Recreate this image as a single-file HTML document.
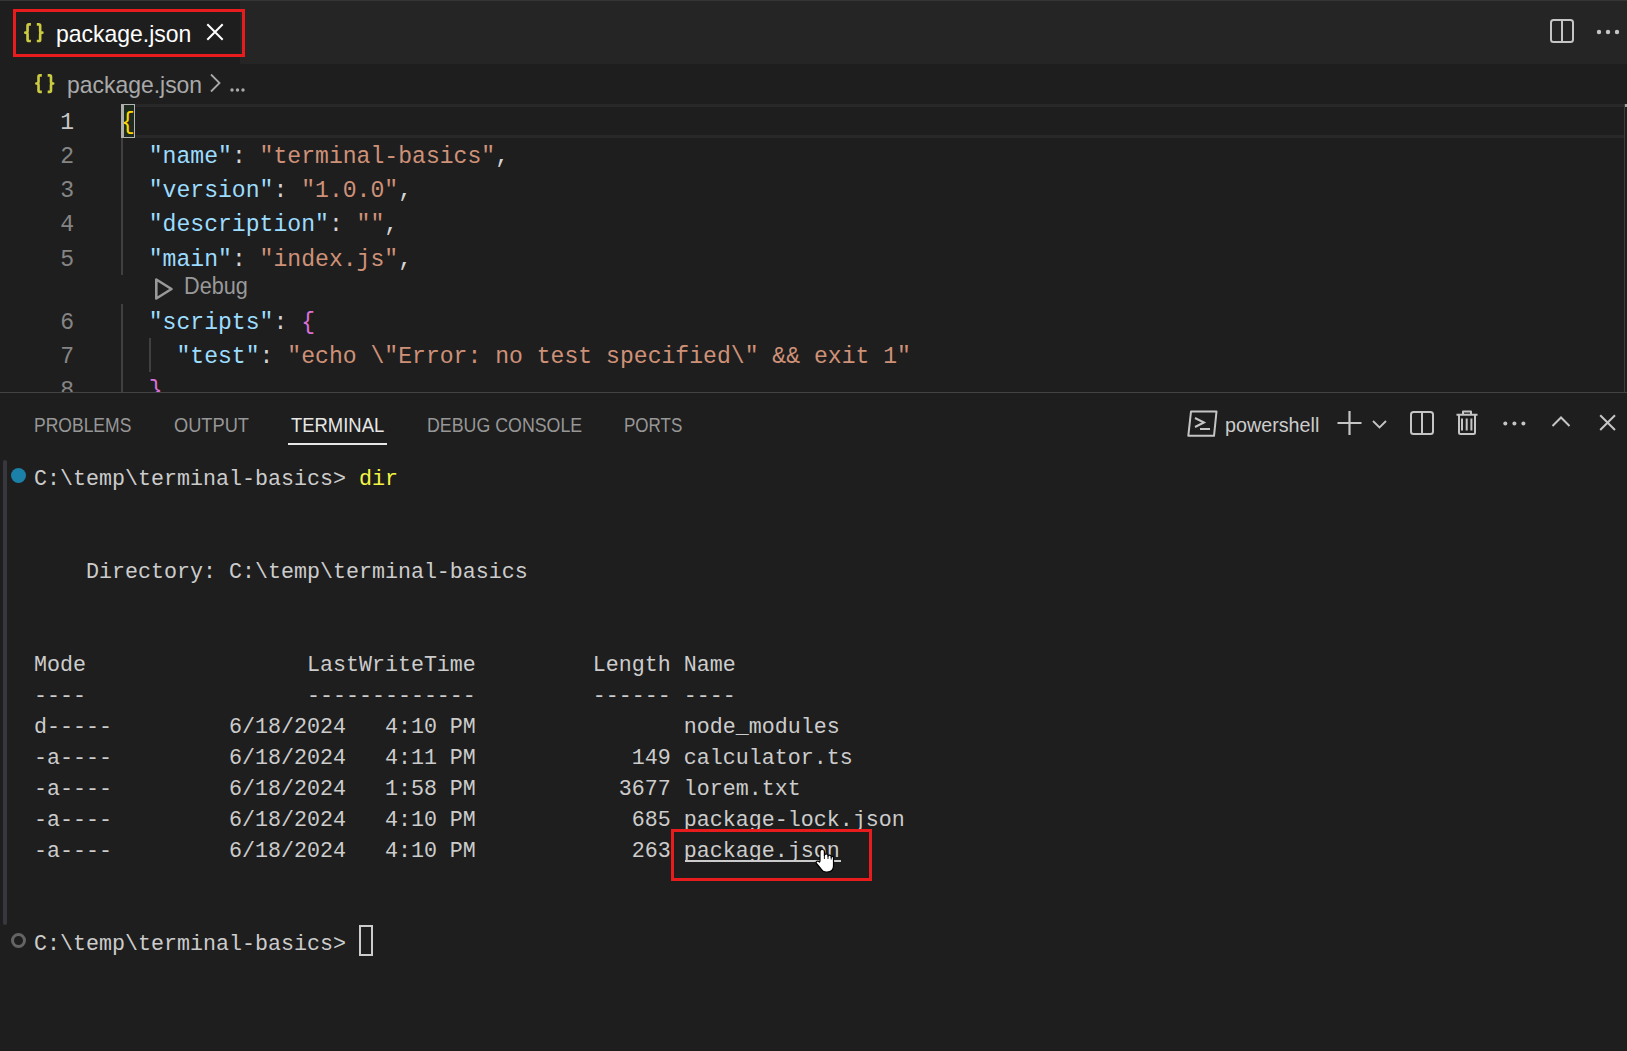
<!DOCTYPE html><html><head><meta charset="utf-8"><style>
*{margin:0;padding:0;box-sizing:border-box}
html,body{width:1627px;height:1051px;overflow:hidden;background:#1e1e1e}
body{position:relative;font-family:"Liberation Sans",sans-serif}
.abs{position:absolute}
.sx{position:absolute;white-space:pre;font-family:"Liberation Sans",sans-serif;transform-origin:0 0;line-height:1}
.ln{position:absolute;left:0;width:74px;transform:scaleY(1.06);transform-origin:0 23px;text-align:right;font-family:"Liberation Mono",monospace;font-size:23.1px;line-height:34px;height:34px;color:#858585}
.cl{position:absolute;left:121px;transform:scaleY(1.06);transform-origin:0 23px;font-family:"Liberation Mono",monospace;font-size:23.1px;line-height:34px;height:34px;color:#d4d4d4;white-space:pre}
.k{color:#9cdcfe}.s{color:#ce9178}.b1{color:#ffd700}.b2{color:#da70d6}
.tr{position:absolute;left:34px;transform:scaleY(1.06);transform-origin:0 21px;font-family:"Liberation Mono",monospace;font-size:21.67px;line-height:31px;height:31px;color:#cccccc;white-space:pre}
.y{color:#f5f543}
</style></head><body>
<div class="abs" style="left:0;top:0;width:1627px;height:64px;background:#252526"></div>
<div class="abs" style="left:0;top:0;width:240px;height:64px;background:#1e1e1e"></div>
<div class="abs" style="left:0;top:0;width:1627px;height:1px;background:#353535"></div>
<svg class="abs" style="left:24.30px;top:22.50px;overflow:visible" width="22" height="22" viewBox="0 0 22 22"><g transform="scale(0.985)" fill="none" stroke="#cbcb41" stroke-width="2.7" stroke-linejoin="round" stroke-linecap="butt"><path d="M7.0 1.35H5Q3.6 1.35 3.6 2.75V8.3Q3.6 9.8 1.35 9.8Q3.6 9.8 3.6 11.3V16.9Q3.6 18.3 5 18.3H7.0"/><path d="M13.0 1.35H15Q16.4 1.35 16.4 2.75V8.3Q16.4 9.8 18.65 9.8Q16.4 9.8 16.4 11.3V16.9Q16.4 18.3 15 18.3H13.0"/></g></svg>
<div class="sx" style="left:55.80px;top:22.28px;font-size:24.00px;color:#ffffff;transform:scaleX(0.9572);">package.json</div>
<svg class="abs" style="left:204px;top:21px" width="22" height="21" viewBox="0 0 22 21"><path d="M3.3 3.3L18.7 18.7M18.7 3.3L3.3 18.7" stroke="#ffffff" stroke-width="2"/></svg>
<div class="abs" style="left:13px;top:9px;width:232px;height:48px;border:3px solid #e81c1c"></div>
<svg class="abs" style="left:1549px;top:18px" width="26" height="26" viewBox="0 0 26 26"><rect x="2" y="2" width="22" height="22" rx="2.5" fill="none" stroke="#c5c5c5" stroke-width="2"/><path d="M13 2V24" stroke="#c5c5c5" stroke-width="2"/></svg>
<svg class="abs" style="left:1594px;top:27px" width="28" height="10" viewBox="0 0 28 10"><circle cx="5" cy="5" r="2.2" fill="#c5c5c5"/><circle cx="14" cy="5" r="2.2" fill="#c5c5c5"/><circle cx="23" cy="5" r="2.2" fill="#c5c5c5"/></svg>
<svg class="abs" style="left:34.90px;top:73.80px;overflow:visible" width="22" height="22" viewBox="0 0 22 22"><g transform="scale(0.975)" fill="none" stroke="#cbcb41" stroke-width="2.7" stroke-linejoin="round" stroke-linecap="butt"><path d="M7.0 1.35H5Q3.6 1.35 3.6 2.75V8.3Q3.6 9.8 1.35 9.8Q3.6 9.8 3.6 11.3V16.9Q3.6 18.3 5 18.3H7.0"/><path d="M13.0 1.35H15Q16.4 1.35 16.4 2.75V8.3Q16.4 9.8 18.65 9.8Q16.4 9.8 16.4 11.3V16.9Q16.4 18.3 15 18.3H13.0"/></g></svg>
<div class="sx" style="left:66.60px;top:72.58px;font-size:24.00px;color:#a9a9a9;transform:scaleX(0.9551);">package.json</div>
<svg class="abs" style="left:207px;top:72px" width="16" height="22" viewBox="0 0 16 22"><path d="M4 2.5L12.5 11L4 19.5" fill="none" stroke="#a9a9a9" stroke-width="1.8"/></svg>
<svg class="abs" style="left:229px;top:86px" width="18" height="8" viewBox="0 0 18 8"><circle cx="3" cy="4" r="1.7" fill="#a9a9a9"/><circle cx="8.5" cy="4" r="1.7" fill="#a9a9a9"/><circle cx="14" cy="4" r="1.7" fill="#a9a9a9"/></svg>
<div class="abs" style="left:0;top:0;width:1627px;height:392px;overflow:hidden"><div class="abs" style="left:121px;top:104px;width:1503px;height:34px;border:3px solid #282828;border-left:0;border-right:0"></div><div class="abs" style="left:1624px;top:104px;width:1px;height:288px;background:#3c3c3c"></div><div class="abs" style="left:1625px;top:104px;width:2px;height:3px;background:#a0a0a0"></div><div class="abs" style="left:121px;top:138px;width:2px;height:137px;background:#404040"></div><div class="abs" style="left:121px;top:304.2px;width:2px;height:88px;background:#404040"></div><div class="abs" style="left:149px;top:338.4px;width:2px;height:34px;background:#404040"></div><div class="abs" style="left:121px;top:104px;width:14px;height:34px;border:1px solid #b4b4b4;background:#1d2a1d"></div><div class="ln" style="top:105.70px;color:#c6c6c6">1</div><div class="cl" style="top:105.70px"><span class="b1">{</span></div><div class="ln" style="top:139.90px;color:#858585">2</div><div class="cl" style="top:139.90px">  <span class="k">"name"</span>: <span class="s">"terminal-basics"</span>,</div><div class="ln" style="top:174.10px;color:#858585">3</div><div class="cl" style="top:174.10px">  <span class="k">"version"</span>: <span class="s">"1.0.0"</span>,</div><div class="ln" style="top:208.30px;color:#858585">4</div><div class="cl" style="top:208.30px">  <span class="k">"description"</span>: <span class="s">""</span>,</div><div class="ln" style="top:242.50px;color:#858585">5</div><div class="cl" style="top:242.50px">  <span class="k">"main"</span>: <span class="s">"index.js"</span>,</div><div class="ln" style="top:305.90px;color:#858585">6</div><div class="cl" style="top:305.90px">  <span class="k">"scripts"</span>: <span class="b2">{</span></div><div class="ln" style="top:340.10px;color:#858585">7</div><div class="cl" style="top:340.10px">    <span class="k">"test"</span>: <span class="s">"echo \"Error: no test specified\" &amp;&amp; exit 1"</span></div><div class="ln" style="top:374.30px;color:#858585">8</div><div class="cl" style="top:374.30px">  <span class="b2">}</span></div><div class="abs" style="left:121px;top:104px;width:3px;height:34px;background:#aeafad"></div><svg class="abs" style="left:152px;top:275px" width="24" height="28" viewBox="0 0 24 28"><path d="M4.3 4.5L19.5 14L4.3 23.5Z" fill="none" stroke="#999999" stroke-width="2.6" stroke-linejoin="round"/></svg></div>
<div class="sx" style="left:184.20px;top:275.10px;font-size:23.50px;color:#999999;transform:scaleX(0.9219);">Debug</div>
<div class="abs" style="left:0;top:392px;width:1627px;height:1px;background:#434343"></div>
<div class="sx" style="left:33.90px;top:415.00px;font-size:20.20px;color:#979797;transform:scaleX(0.8675);">PROBLEMS</div>
<div class="sx" style="left:173.80px;top:415.00px;font-size:20.20px;color:#979797;transform:scaleX(0.9035);">OUTPUT</div>
<div class="sx" style="left:290.70px;top:415.00px;font-size:20.20px;color:#e7e7e7;transform:scaleX(0.9129);">TERMINAL</div>
<div class="sx" style="left:426.50px;top:415.00px;font-size:20.20px;color:#979797;transform:scaleX(0.8813);">DEBUG CONSOLE</div>
<div class="sx" style="left:623.80px;top:415.00px;font-size:20.20px;color:#979797;transform:scaleX(0.8416);">PORTS</div>
<div class="abs" style="left:288px;top:443px;width:99px;height:2px;background:#e7e7e7"></div>
<svg class="abs" style="left:1186px;top:409px" width="32" height="29" viewBox="0 0 32 29"><path d="M5 2.5H30.5L28 26.8H2.3Z" fill="none" stroke="#c5c5c5" stroke-width="2" stroke-linejoin="round"/><path d="M9 9L18 13.5L9 18" fill="none" stroke="#c5c5c5" stroke-width="2"/><path d="M14 20H24" stroke="#c5c5c5" stroke-width="2"/></svg>
<div class="sx" style="left:1224.60px;top:414.42px;font-size:21.00px;color:#cccccc;transform:scaleX(0.9392);">powershell</div>
<svg class="abs" style="left:1336px;top:410px" width="27" height="26" viewBox="0 0 27 26"><path d="M13.5 1V25M1.5 13H25.5" stroke="#c5c5c5" stroke-width="2.2"/></svg>
<svg class="abs" style="left:1371px;top:418px" width="17" height="12" viewBox="0 0 17 12"><path d="M2 3L8.5 9.5L15 3" fill="none" stroke="#c5c5c5" stroke-width="1.8"/></svg>
<svg class="abs" style="left:1409px;top:410px" width="26" height="26" viewBox="0 0 26 26"><rect x="2" y="2" width="22" height="22" rx="2.5" fill="none" stroke="#c5c5c5" stroke-width="2"/><path d="M13 2V24" stroke="#c5c5c5" stroke-width="2"/></svg>
<svg class="abs" style="left:1455px;top:409px" width="24" height="27" viewBox="0 0 24 27"><path d="M1.5 5.8H22.5M8 5.8V2.5H16V5.8M4 5.8V23.5Q4 25 5.5 25H18.5Q20 25 20 23.5V5.8M7 9.5V21.5M11.7 9.5V21.5M16.4 9.5V21.5" fill="none" stroke="#c5c5c5" stroke-width="2" stroke-linejoin="round"/></svg>
<svg class="abs" style="left:1501px;top:419px" width="28" height="9" viewBox="0 0 28 9"><circle cx="4.3" cy="4.4" r="2" fill="#c5c5c5"/><circle cx="13.4" cy="4.4" r="2" fill="#c5c5c5"/><circle cx="22.4" cy="4.4" r="2" fill="#c5c5c5"/></svg>
<svg class="abs" style="left:1550px;top:413px" width="22" height="16" viewBox="0 0 22 16"><path d="M2.5 13L11 4.5L19.5 13" fill="none" stroke="#c5c5c5" stroke-width="2"/></svg>
<svg class="abs" style="left:1598px;top:413px" width="19" height="19" viewBox="0 0 19 19"><path d="M2.2 2.2L17 17M17 2.2L2.2 17" stroke="#c5c5c5" stroke-width="2"/></svg>
<div class="tr" style="top:463.60px">C:\temp\terminal-basics&gt; <span class="y">dir</span></div>
<div class="tr" style="top:556.60px">    Directory: C:\temp\terminal-basics</div>
<div class="tr" style="top:649.60px">Mode                 LastWriteTime         Length Name</div>
<div class="tr" style="top:680.60px">----                 -------------         ------ ----</div>
<div class="tr" style="top:711.60px">d-----         6/18/2024   4:10 PM                node_modules</div>
<div class="tr" style="top:742.60px">-a----         6/18/2024   4:11 PM            149 calculator.ts</div>
<div class="tr" style="top:773.60px">-a----         6/18/2024   1:58 PM           3677 lorem.txt</div>
<div class="tr" style="top:804.60px">-a----         6/18/2024   4:10 PM            685 package-lock.json</div>
<div class="tr" style="top:835.60px">-a----         6/18/2024   4:10 PM            263 package.json</div>
<div class="tr" style="top:928.60px">C:\temp\terminal-basics&gt; </div>
<div class="abs" style="left:3.3px;top:460px;width:4px;height:465px;border-radius:2px;background:#37373d"></div>
<div class="abs" style="left:10.9px;top:467.9px;width:15px;height:15px;border-radius:50%;background:#1b81a8"></div>
<div class="abs" style="left:10.9px;top:933px;width:15.2px;height:15.2px;border-radius:50%;border:3px solid #646464"></div>
<div class="abs" style="left:359px;top:925px;width:13.5px;height:31px;border:2px solid #cccccc"></div>
<div class="abs" style="left:671px;top:829px;width:201px;height:52px;border:3px solid #e81c1c"></div>
<div class="abs" style="left:684.5px;top:860px;width:156.3px;height:2px;background:#cccccc"></div>
<svg class="abs" style="left:814.2px;top:848.2px" width="22" height="26" viewBox="0 0 22 26"><path d="M6 13V3.5Q6 1.5 8.2 1.5Q10.4 1.5 10.4 3.5V7.5Q10.4 6 12.2 6Q14 6 14 7.8V8.5Q14 7.2 15.6 7.2Q17.2 7.2 17.2 9V9.5Q17.2 8.4 18.4 8.4Q19.5 8.4 19.5 10V18Q19.5 24 13 24H12Q9 24 7 21L2.5 15.5Q1.5 14 3 13.2Q4.3 12.6 5.5 14Z" fill="#ffffff" stroke="#000000" stroke-width="1.2" stroke-linejoin="round"/><path d="M10.4 7.5V11M14 8.5V11M17.2 9.5V11.5" stroke="#000" stroke-width="0.9"/></svg>
</body></html>
